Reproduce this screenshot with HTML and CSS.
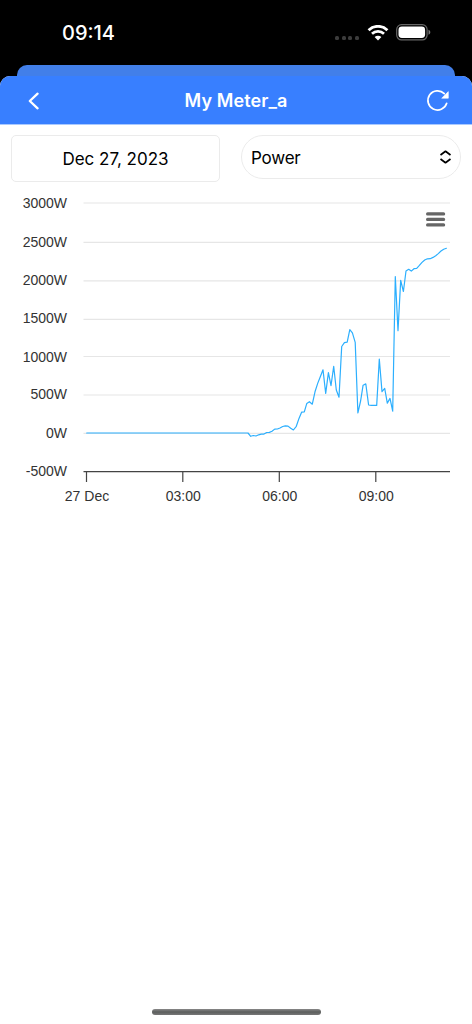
FILE: index.html
```html
<!DOCTYPE html>
<html lang="en">
<head>
  <meta charset="UTF-8">
  <meta name="viewport" content="width=device-width, initial-scale=1.0">
  <title>My Meter_a</title>
  <link rel="stylesheet" href="styles.css">
</head>
<body>

  <div class="status-bar">
    <span class="time">09:14</span>
    <div class="status-icons">
      <span class="signal"><i></i><i></i><i></i><i></i></span>
      <svg class="wifi" width="22" height="16" viewBox="0 0 22 16">
        <path d="M1.6 5.2a13.4 13.4 0 0 1 18.8 0" fill="none" stroke="#fff" stroke-width="2.9"/>
        <path d="M5 8.8a8.6 8.6 0 0 1 12 0" fill="none" stroke="#fff" stroke-width="2.7"/>
        <path d="M7.6 12a4.9 4.9 0 0 1 6.8 0L11 15.5z" fill="#fff"/>
      </svg>
      <svg class="battery" width="36" height="17" viewBox="0 0 36 17">
        <rect x="0.7" y="0.7" width="30.4" height="15.2" rx="4.8" fill="none" stroke="#666" stroke-width="1.2"/>
        <rect x="2.5" y="2.6" width="26.6" height="11.4" rx="3.4" fill="#fff"/>
        <path d="M32.5 5.8c2.4.8 2.4 4.2 0 5z" fill="#777"/>
      </svg>
    </div>
  </div>

  <div class="sheet-behind"></div>

  <div class="sheet">
    <div class="header">
      <svg class="back" width="12" height="18" viewBox="0 0 12 18">
        <path d="M9.6 1.7L1.8 9l7.8 7.3" fill="none" stroke="#fff" stroke-width="2.3" stroke-linecap="round" stroke-linejoin="round"/>
      </svg>
      <h1>My Meter_a</h1>
      <svg class="refresh" width="24" height="24" viewBox="0 0 24 24">
        <path d="M20.7 15.3A9.6 9.6 0 1 1 18.3 5.6" fill="none" stroke="#fff" stroke-width="1.7" stroke-linecap="round"/>
        <path d="M22.3 3.6v6.6h-6.6z" fill="#fff" stroke="#fff" stroke-width="0.6" stroke-linejoin="round"/>
      </svg>
    </div>

    <div class="filters">
      <div class="date">Dec 27, 2023</div>
      <div class="select">
        <span>Power</span>
        <svg width="13" height="14" viewBox="0 0 13 14">
          <path d="M1.5 5l5-3.7 5 3.7M1.5 9l5 3.7 5-3.7" fill="none" stroke="#000" stroke-width="1.7" stroke-linejoin="round"/>
        </svg>
      </div>
    </div>

    <svg class="chart" width="472" height="330" viewBox="0 190 472 330">
      <g class="grid">
        <path d="M83.5 203H450"/>
        <path d="M83.5 242.4H450"/>
        <path d="M83.5 280.8H450"/>
        <path d="M83.5 319.4H450"/>
        <path d="M83.5 356.5H450"/>
        <path d="M83.5 395H450"/>
        <path d="M83.5 433.4H450"/>
      </g>
      <path class="axis" d="M83.5 471.7H450M86.5 471.7V482M182.8 471.7V482M279.3 471.7V482M375.8 471.7V482"/>

      <g class="y-labels">
        <text x="67" y="208">3000W</text>
        <text x="67" y="246.5">2500W</text>
        <text x="67" y="285">2000W</text>
        <text x="67" y="323.3">1500W</text>
        <text x="67" y="361.6">1000W</text>
        <text x="67" y="399.3">500W</text>
        <text x="67" y="437.7">0W</text>
        <text x="67" y="476">-500W</text>
      </g>
      <g class="x-labels">
        <text x="87" y="501.3">27 Dec</text>
        <text x="183.3" y="501.3">03:00</text>
        <text x="279.8" y="501.3">06:00</text>
        <text x="376.3" y="501.3">09:00</text>
      </g>

      <polyline class="line" points="86.7,433 248,433 250.7,436.3 253.3,435.5 256,436 258.7,434.8 261.3,434.1 264,434.1 266.7,432.5 269.4,432.4 272,431.3 274.7,429.1 277.4,429 280,428 282.7,426.5 285.3,425.8 288,426.1 290.7,428.3 293.4,430 296.3,426.3 299,418.4 301.7,412.1 304.3,411.8 306.8,403.4 309.4,401.7 312.3,404.2 315,391.8 317.7,383.4 320.3,376.7 323,369.8 325.7,393.4 328.4,372.6 331,385.7 333.7,366.3 336.3,390 339,397.2 341.7,346.5 344.4,342.7 347.2,342.2 349.8,329.6 352.4,332.8 355.2,342.3 357.9,412.9 360.6,401 363.1,385.2 365.8,383.9 368.6,405 371.3,405.3 374,405.4 376.7,405.4 379.3,359 382,391.6 384.7,388.4 387.3,403.1 390,398.4 392.7,411.2 395.3,276.5 398,330.6 400.7,280.4 403.4,291.5 406,271 408.7,269.3 411.3,271.1 414,268.7 416.7,268.3 419.4,265.4 422,262.4 424.7,260 427.4,258.8 430.2,258.7 433,257.4 435.7,255.7 438.3,253.6 441,251 443.7,249.2 446.4,248.3"/>

      <path class="menu" d="M427.6 213.9H443.6M427.6 219.4H443.6M427.6 224.9H443.6"/>
    </svg>

    <div class="home-indicator"></div>
  </div>

</body>
</html>
```

FILE: styles.css
```css
* {
  box-sizing: border-box;
}

body {
  margin: 0;
  height: 1024px;
  display: flex;
  flex-direction: column;
  background-color: #000;
  font-family: Inter, "Liberation Sans", sans-serif;
  color: #000;
  overflow: hidden;
}

.status-bar {
  height: 65px;
  display: flex;
  justify-content: space-between;
  align-items: center;
  padding: 0 40px 0 62px;
  color: #fff;
}

.time {
  font-size: 20px;
  font-weight: 500;
  line-height: 24px;
}

.status-icons {
  display: flex;
  align-items: center;
}

.signal {
  display: flex;
  gap: 2.6px;
  margin: 10px 7.5px 0 0;
}

.signal i {
  width: 4px;
  height: 4px;
  border-radius: 1.5px;
  background-color: #3c3c3c;
}

.battery {
  margin-left: 7.5px;
}

.sheet-behind {
  height: 11px;
  margin: 0 17px;
  border-radius: 10px 10px 0 0;
  background-color: #427fe9;
}

.sheet {
  flex: 1;
  display: flex;
  flex-direction: column;
  background-color: #fff;
  border-radius: 10px 10px 0 0;
  overflow: hidden;
}

.header {
  height: 48px;
  flex: none;
  display: flex;
  align-items: center;
  justify-content: space-between;
  padding: 0 22px 0 28px;
  background-color: #387fff;
  box-shadow: 0 1px 0 #a9c9ff;
  color: #fff;
}

.header h1 {
  margin: 2px 0 0;
  font-size: 18px;
  font-weight: 600;
  line-height: 24px;
  letter-spacing: 0.1px;
}

.back {
  margin-right: 6px;
  margin-top: 2px;
}

.filters {
  display: flex;
  align-items: flex-start;
  gap: 21px;
  padding: 11px 11px 0;
  font-size: 17px;
}

.date {
  width: 209px;
  height: 47px;
  border: 1px solid #ebebeb;
  border-radius: 5px;
  line-height: 46px;
  text-align: center;
}

.select {
  width: 220px;
  height: 44px;
  display: flex;
  align-items: center;
  justify-content: space-between;
  padding: 0 8px 0 9px;
  border: 1px solid #ebebeb;
  border-radius: 22px;
}

.select span {
  padding-top: 2px;
  letter-spacing: -0.2px;
}

.chart {
  display: block;
  flex: none;
  margin-top: 8px;
}

.grid path {
  stroke: #e6e6e6;
  stroke-width: 1.2;
}

.axis {
  fill: none;
  stroke: #444;
  stroke-width: 1.2;
}

.y-labels,
.x-labels {
  font-family: "Liberation Sans", Arial, sans-serif;
  font-size: 14px;
  fill: #333;
}

.y-labels {
  text-anchor: end;
}

.x-labels {
  text-anchor: middle;
}

.line {
  fill: none;
  stroke: #2caffe;
  stroke-width: 1.2;
  stroke-linejoin: round;
  stroke-linecap: round;
}

.menu {
  stroke: #666;
  stroke-width: 3.2;
  stroke-linecap: round;
}

.home-indicator {
  width: 169px;
  height: 6px;
  margin: auto auto 9px;
  border-radius: 3px;
  background: linear-gradient(#888, #5c5e5d 50%, #777);
}
```
